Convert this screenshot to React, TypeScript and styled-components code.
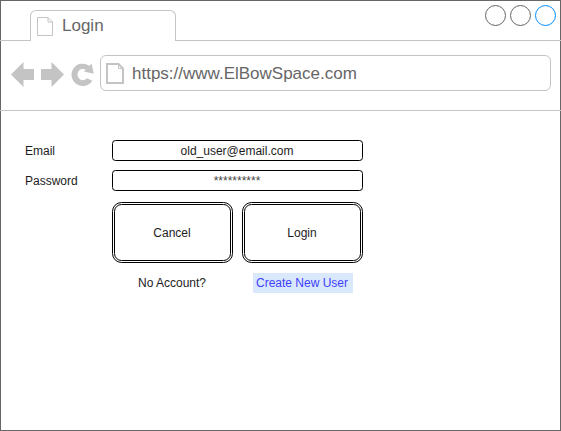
import React from "react";
import styled, { createGlobalStyle } from "styled-components";

const GlobalStyle = createGlobalStyle`
  *, *::before, *::after { box-sizing: border-box; }
  body { margin: 0; background: #fff; overflow: hidden; }
`;

const Window = styled.div`
  width: 561px;
  height: 431px;
  border: 1px solid #666;
  background: #fff;
  font-family: "Liberation Sans", Arial, sans-serif;
`;

const TabStrip = styled.header`
  display: flex;
  align-items: flex-start;
  justify-content: space-between;
  height: 40px;
  margin: 0 -1px;
  padding: 0 5px 0 30px;
  border-bottom: 1px solid #c4c4c4;
`;

const Tab = styled.div`
  display: flex;
  align-items: flex-start;
  width: 146px;
  height: 31px;
  margin-top: 9px;
  padding: 6px 0 0 6px;
  border: 1px solid #c4c4c4;
  border-bottom: 0;
  border-radius: 6px 6px 0 0;
  background: #fff;
  color: #666;
  font-size: 17px;
  line-height: 20px;
`;

const TabTitle = styled.span`
  margin: -1px 0 0 9px;
`;

const WindowControls = styled.div`
  display: flex;
  gap: 4px;
  padding-top: 4px;
`;

const Control = styled.span<{ $color: string }>`
  width: 21px;
  height: 21px;
  border: 1px solid ${(p) => p.$color};
  border-radius: 50%;
`;

const NavBar = styled.nav`
  display: flex;
  align-items: flex-start;
  height: 70px;
  margin: 0 -1px;
  padding: 14px 10px 0 10px;
  border-bottom: 1px solid #c4c4c4;
`;

const NavIcons = styled.svg`
  flex: none;
  width: 90px;
  height: 36px;
  fill: #c4c4c4;
`;

const AddressBar = styled.div`
  display: flex;
  align-items: flex-start;
  width: 451px;
  height: 36px;
  padding: 7px 0 0 5px;
  border: 1px solid #c4c4c4;
  border-radius: 6px;
  color: #666;
  font-size: 17px;
  line-height: 20px;
`;

const Address = styled.span`
  margin: 1px 0 0 7px;
`;

const PageIcon = styled.svg`
  flex: none;
  fill: none;
  stroke: #c4c4c4;
`;

const Form = styled.form`
  display: grid;
  grid-template-columns: 87px 251px;
  row-gap: 9px;
  padding: 29px 0 0 24px;
  color: #1c1c1c;
  font-size: 12px;
  line-height: 14px;
`;

const Label = styled.label`
  align-self: center;
`;

const Field = styled.input<{ $color?: string }>`
  width: 251px;
  height: 21px;
  padding: 0 1px 0 0;
  border: 1px solid #000;
  border-radius: 3.5px;
  outline: 0;
  background: #fff;
  color: ${(p) => p.$color ?? "#1c1c1c"};
  font: inherit;
  text-align: center;
`;

const Actions = styled.div`
  grid-column: 2;
  display: grid;
  grid-template-columns: 121px 121px;
  column-gap: 9px;
  margin-top: 2px;
`;

const ActionButton = styled.button`
  height: 61px;
  padding: 0 1px 0 0;
  border: 3px double #000;
  border-radius: 9.5px;
  background: #fff;
  color: inherit;
  font: inherit;
`;

const Hint = styled.span`
  justify-self: center;
  margin-top: 13px;
  padding-right: 1px;
`;

const CreateLink = styled.a`
  justify-self: center;
  width: 100px;
  height: 20px;
  margin: 9.5px 0 0 0;
  padding-right: 1px;
  background: #dae8fc;
  color: #3f3fff;
  line-height: 20px;
  text-align: center;
`;

export default function App() {
  return (
    <>
      <GlobalStyle />
      <Window>
        <TabStrip>
          <Tab>
            <PageIcon width="16" height="19" viewBox="0 0 16 19">
              <path d="M.5 .5H11L15.5 5V18.5H.5ZM11 .5V5H15.5" />
            </PageIcon>
            <TabTitle>Login</TabTitle>
          </Tab>
          <WindowControls>
            <Control $color="#666" />
            <Control $color="#666" />
            <Control $color="#008cff" />
          </WindowControls>
        </TabStrip>
        <NavBar>
          <NavIcons viewBox="10 55 90 36">
            <path d="M11 74.5L23.5 62V69H34V80H23.5V87Z" />
            <path d="M64 74.5L51.5 62V69H41V80H51.5V87Z" />
            <path d="M92.3 80.7A11.2 11.2 0 1 1 89.2 65.7L91.6 63.7L93.8 73.8L83.8 71.6L85.9 69.7A5.6 5.6 0 1 0 87.2 78.3Z" />
          </NavIcons>
          <AddressBar>
            <PageIcon width="19" height="21" viewBox="0 0 19 21">
              <path d="M1 1H12.5L17 5.5V20H1Z" strokeWidth="2" />
              <path d="M12.5 1V5.5H17" />
            </PageIcon>
            <Address>https://www.ElBowSpace.com</Address>
          </AddressBar>
        </NavBar>
        <Form>
          <Label htmlFor="email">Email</Label>
          <Field id="email" defaultValue="old_user@email.com" />
          <Label htmlFor="password">Password</Label>
          <Field id="password" $color="#444" defaultValue="**********" />
          <Actions>
            <ActionButton type="button">Cancel</ActionButton>
            <ActionButton type="button">Login</ActionButton>
            <Hint>No Account?</Hint>
            <CreateLink>Create New User</CreateLink>
          </Actions>
        </Form>
      </Window>
    </>
  );
}
